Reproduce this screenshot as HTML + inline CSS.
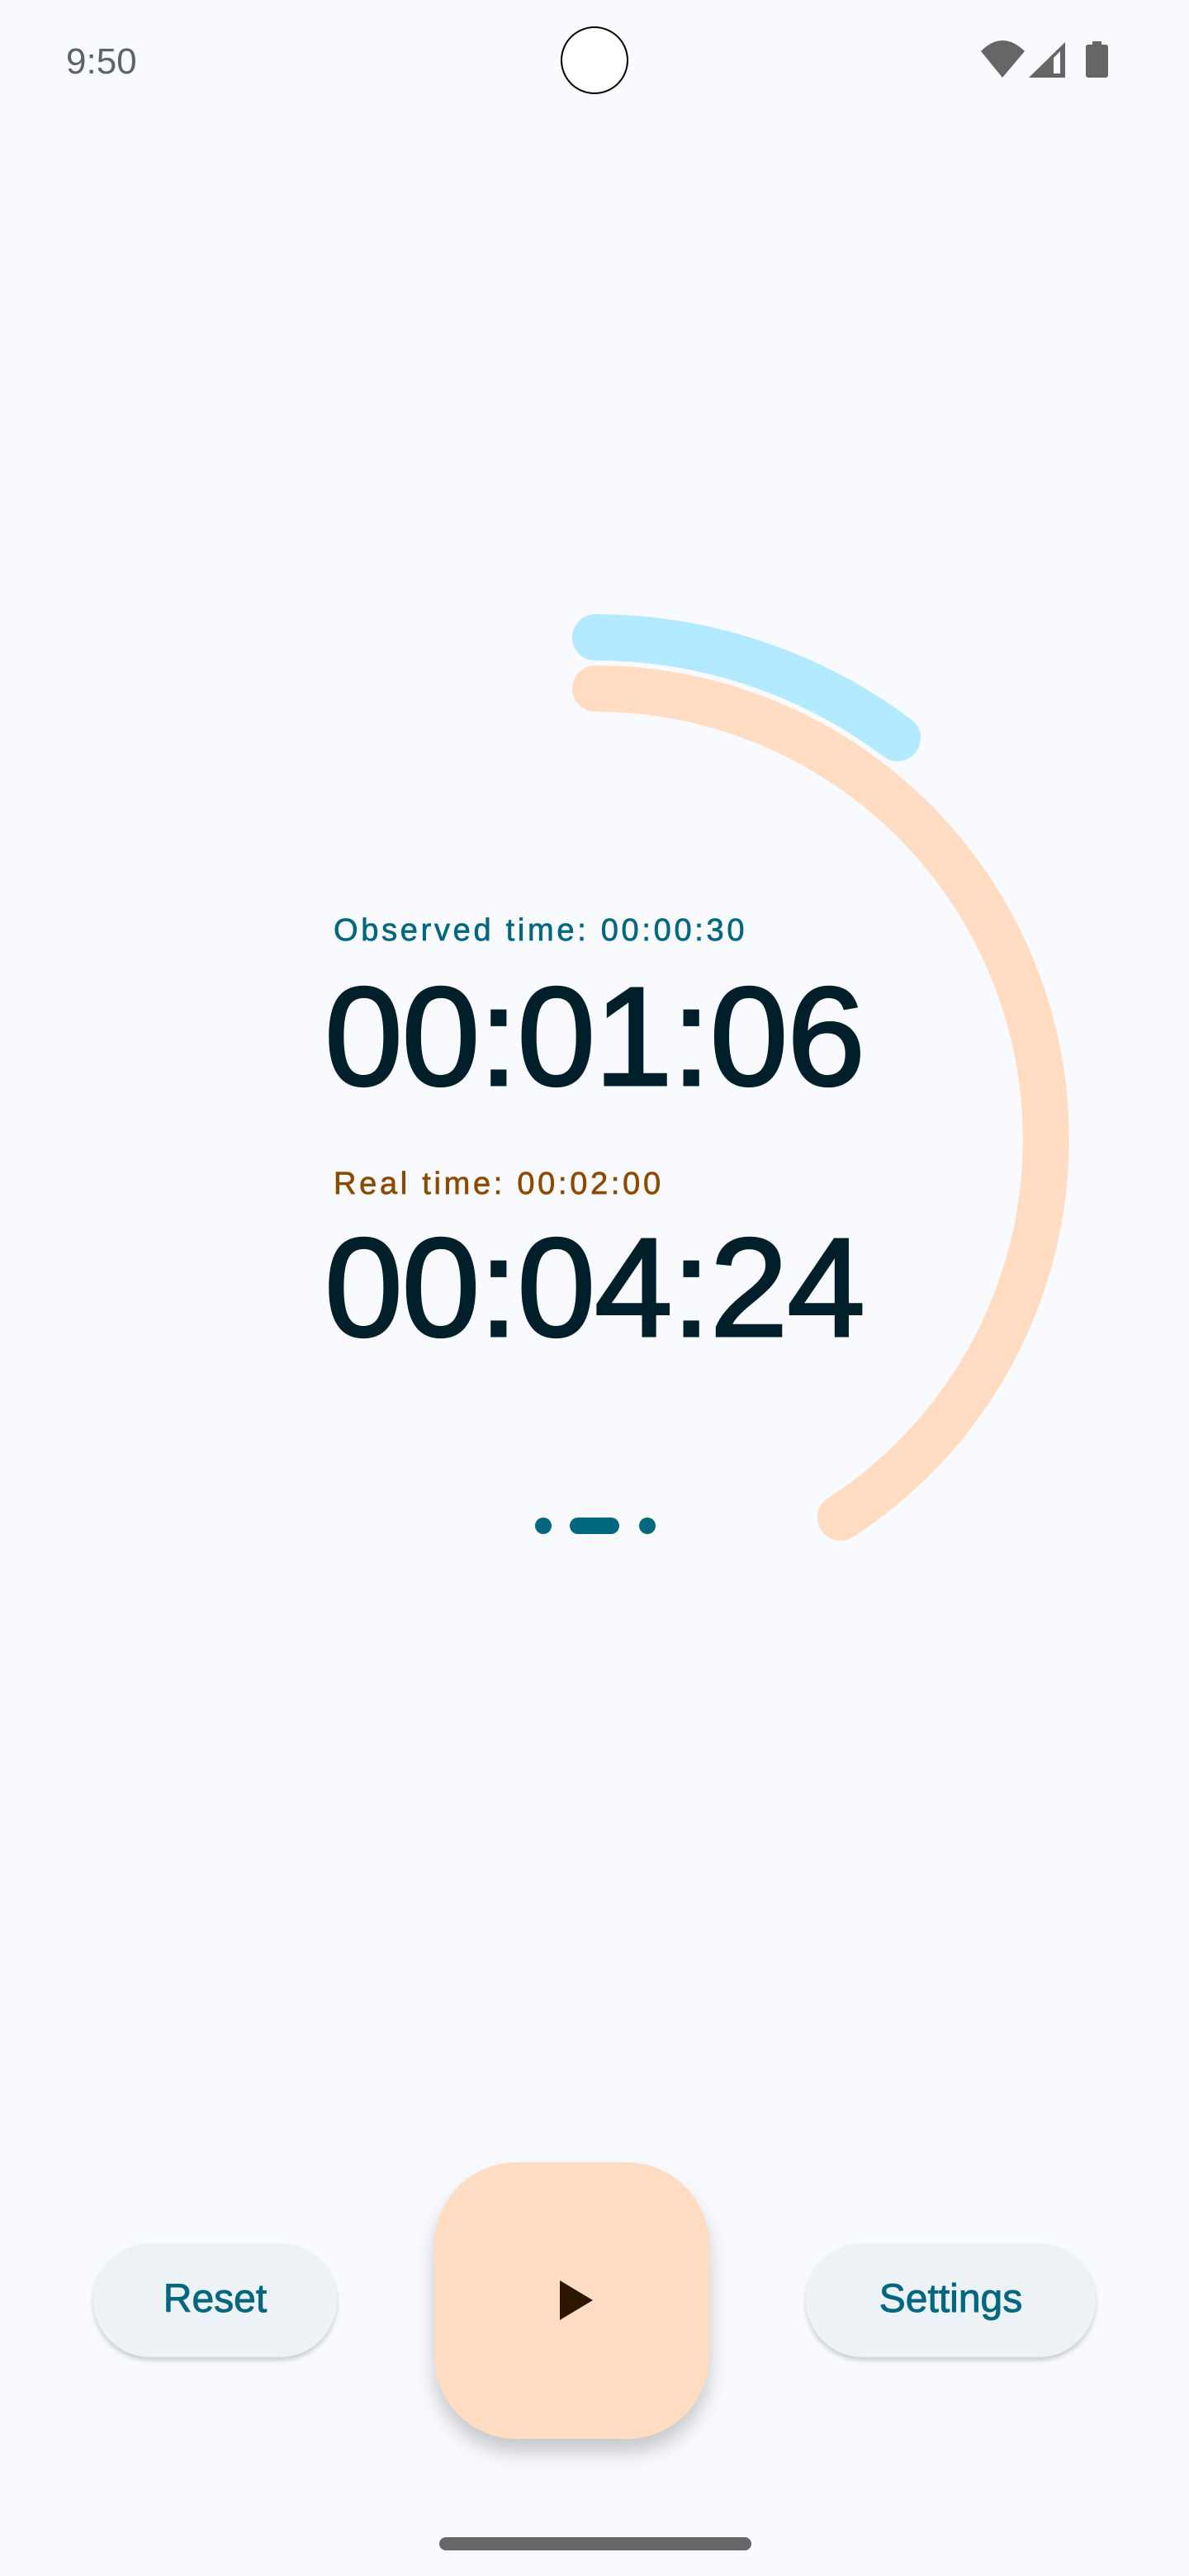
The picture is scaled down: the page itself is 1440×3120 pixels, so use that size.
<!DOCTYPE html>
<html><head><meta charset="utf-8"><style>
html,body{margin:0;padding:0}
body{width:1440px;height:3120px;background:#f9fafd;position:relative;overflow:hidden;font-family:"Liberation Sans",sans-serif}
.abs{position:absolute}
.time{left:80px;top:50px;font-size:44px;color:#5f6368;line-height:50px}
.lbl{font-size:38px;letter-spacing:3.7px;line-height:44px;-webkit-text-stroke:0.7px currentColor}
.big{left:0;width:1440px;text-align:center;font-size:170px;font-weight:normal;color:#001f2a;letter-spacing:-1px;line-height:176px;-webkit-text-stroke:3px #001f2a}
.btn{background:#edf2f7;border-radius:70px;box-shadow:0 4px 6px rgba(0,0,0,0.18);color:#00677f;font-size:48px;text-align:center;line-height:136px;height:138px;top:2717px;-webkit-text-stroke:0.9px #00677f}
</style></head><body>
<div class="abs time">9:50</div>
<div class="abs" style="left:679px;top:32px;width:82px;height:82px;border:2px solid #000;border-radius:50%;background:#fff;box-sizing:border-box"></div>
<svg class="abs" style="left:0;top:0" width="1440" height="3120">
<path d="M1188 62 Q1214 36 1241 62 L1214 94 Z" fill="#666"/>
<path d="M1246 94 L1290 51 L1290 94 Z M1276 70 L1276 89 L1284 89 L1284 62 Z" fill="#666" fill-rule="evenodd"/>
<rect x="1323" y="50" width="11" height="6" fill="#666"/>
<rect x="1315" y="54" width="27" height="40" rx="3" fill="#666"/>
<path d="M721 772 A608 608 0 0 1 1087 894" fill="none" stroke="#b3eaff" stroke-width="56" stroke-linecap="round"/>
<path d="M721 834 A546 546 0 0 1 1018 1838" fill="none" stroke="#ffdcc2" stroke-width="56" stroke-linecap="round"/>
<circle cx="658" cy="1848" r="10" fill="#00677f"/>
<rect x="690" y="1838" width="60" height="20" rx="10" fill="#00677f"/>
<circle cx="784" cy="1848" r="10" fill="#00677f"/>
<rect x="532" y="3073" width="378" height="16" rx="8" fill="#666769"/>
</svg>
<div class="abs lbl" style="left:404px;top:1105px;color:#00677f">Observed time: 00:00:30</div>
<div class="abs big" style="top:1168px">00:01:06</div>
<div class="abs lbl" style="left:404px;top:1412px;color:#8b4a00">Real time: 00:02:00</div>
<div class="abs big" style="top:1472px">00:04:24</div>
<div class="abs btn" style="left:113px;width:295px">Reset</div>
<div class="abs btn" style="left:976px;width:351px">Settings</div>
<div class="abs" style="left:526px;top:2619px;width:333px;height:335px;border-radius:100px;background:#ffdcc2;box-shadow:0 16px 24px rgba(0,0,0,0.2)"></div>
<svg class="abs" style="left:678px;top:2762px" width="42" height="48"><path d="M0 0 L40 24 L0 48 Z" fill="#2d1600"/></svg>
</body></html>
